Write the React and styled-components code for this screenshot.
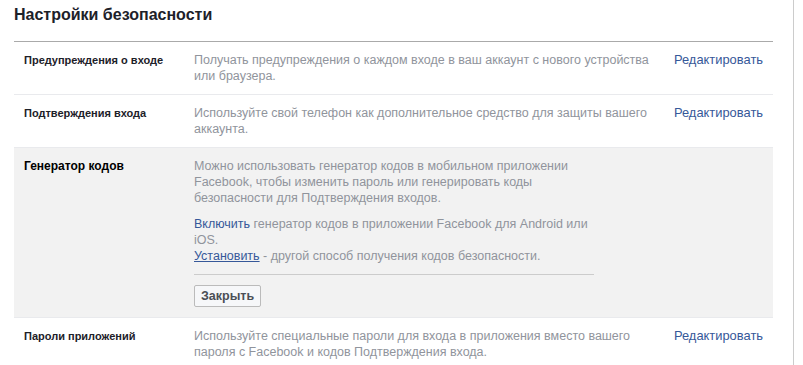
import React from 'react';
import styled, { createGlobalStyle } from 'styled-components';

const GlobalStyle = createGlobalStyle`
  body {
    margin: 0;
    background: #fff;
    font-family: "Liberation Sans", Arial, sans-serif;
  }
`;

const Page = styled.div`
  width: 759px;
  height: 365px;
  padding: 0 20px 0 14px;
  border-right: 1px solid #ccc;
  overflow: hidden;
`;

const Title = styled.h2`
  margin: 0;
  height: 42px;
  padding-top: 5px;
  box-sizing: border-box;
  font-size: 16px;
  line-height: 20px;
  font-weight: bold;
  color: #1d2129;
  border-bottom: 1px solid #aaa;
`;

const Row = styled.div`
  display: grid;
  grid-template-columns: 170px 464px 1fr;
  padding: 10px 10px;
  font-size: 12.5px;
  line-height: 16px;
  background: ${(p) => (p.$open ? '#f2f2f2' : '#fff')};
  border-top: ${(p) => (p.$first ? 'none' : '1px solid #e9eaed')};
`;

const Label = styled.div`
  font-weight: bold;
  font-size: ${(p) => (p.$open ? '12px' : '11px')};
  color: ${(p) => (p.$open ? '#000' : '#1d2129')};
`;

const Desc = styled.div`
  color: #90949c;
  max-width: ${(p) => (p.$narrow ? '400px' : 'none')};
`;

const Para = styled.p`
  margin: 0 0 10px;
`;

const Edit = styled.a`
  justify-self: end;
  font-size: 12.9px;
  color: #365899;
  text-decoration: none;
  cursor: pointer;
`;

const Inline = styled.a`
  color: #365899;
  text-decoration: ${(p) => (p.$underline ? 'underline' : 'none')};
  cursor: pointer;
`;

const Divider = styled.div`
  width: 400px;
  height: 1px;
  background: #ccc;
  margin: 10px 0;
`;

const Button = styled.button`
  display: block;
  height: 22px;
  padding: 0 6px;
  font-family: inherit;
  font-size: 12.5px;
  font-weight: bold;
  color: #4b4f56;
  background: #f6f7f9;
  border: 1px solid #bbb;
  border-radius: 2px;
  cursor: pointer;
`;

const rows = [
  {
    label: 'Предупреждения о входе',
    text: 'Получать предупреждения о каждом входе в ваш аккаунт с нового устройства или браузера.',
  },
  {
    label: 'Подтверждения входа',
    text: 'Используйте свой телефон как дополнительное средство для защиты вашего аккаунта.',
  },
];

const App = () => (
  <>
    <GlobalStyle />
    <Page>
      <Title>Настройки безопасности</Title>
      {rows.map((r, i) => (
        <Row key={r.label} $first={i === 0}>
          <Label>{r.label}</Label>
          <Desc>{r.text}</Desc>
          <Edit>Редактировать</Edit>
        </Row>
      ))}
      <Row $open>
        <Label $open>Генератор кодов</Label>
        <Desc $narrow>
          <Para>
            Можно использовать генератор кодов в мобильном приложении Facebook, чтобы изменить
            пароль или генерировать коды безопасности для Подтверждения входов.
          </Para>
          <div>
            <Inline>Включить</Inline> генератор кодов в приложении Facebook для Android или iOS.
          </div>
          <div>
            <Inline $underline>Установить</Inline> - другой способ получения кодов безопасности.
          </div>
          <Divider />
          <Button>Закрыть</Button>
        </Desc>
        <div />
      </Row>
      <Row>
        <Label>Пароли приложений</Label>
        <Desc>
          Используйте специальные пароли для входа в приложения вместо вашего пароля с Facebook и
          кодов Подтверждения входа.
        </Desc>
        <Edit>Редактировать</Edit>
      </Row>
    </Page>
  </>
);

export default App;
